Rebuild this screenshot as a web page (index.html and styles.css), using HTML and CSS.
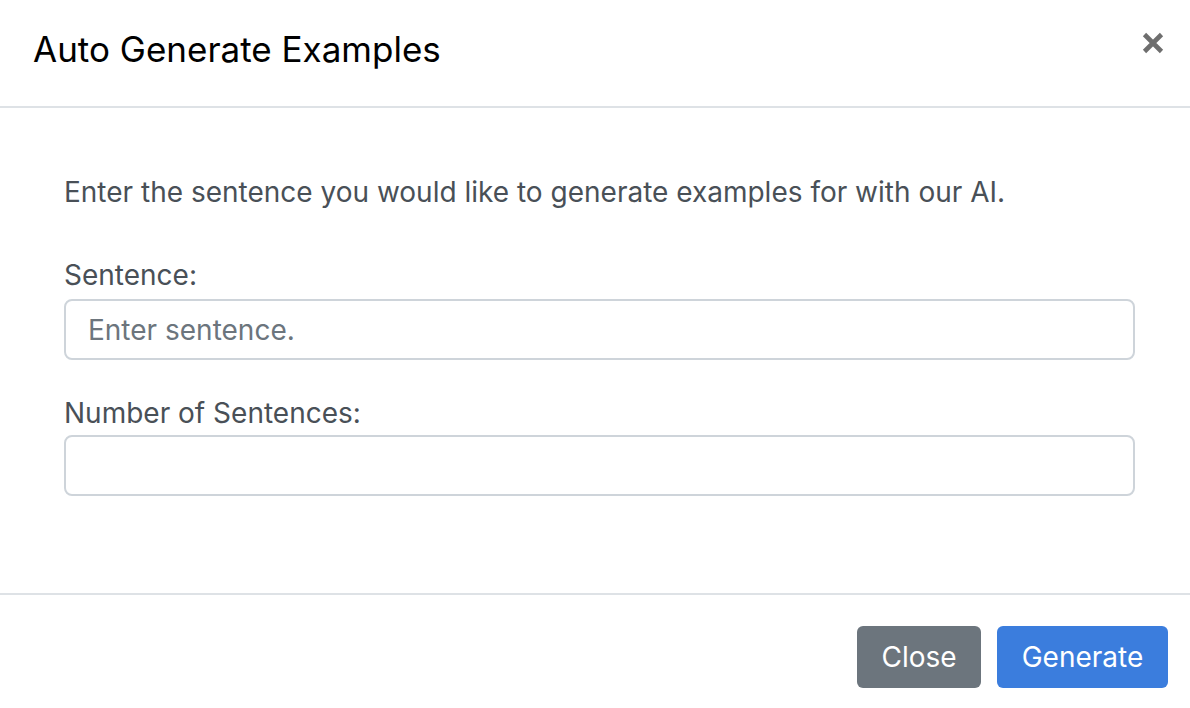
FILE: index.html
```html
<!DOCTYPE html>
<html>
<head>
<meta charset="utf-8">
<link rel="stylesheet" href="styles.css">
</head>
<body>
<div class="modal">
  <div class="modal-header">
    <h1 class="modal-title">Auto Generate Examples</h1>
    <button class="close-x" aria-label="Close">
      <svg width="22" height="22" viewBox="0 0 22 22"><path d="M2.5 2.5 L19.5 19.5 M19.5 2.5 L2.5 19.5" stroke="#6e6e6e" stroke-width="4.6" stroke-linecap="butt"/></svg>
    </button>
  </div>
  <div class="modal-body">
    <p class="intro">Enter the sentence you would like to generate examples for with our AI.</p>
    <label class="field-label">Sentence:</label>
    <input class="field-input" type="text" placeholder="Enter sentence.">
    <label class="field-label second">Number of Sentences:</label>
    <input class="field-input" type="text">
  </div>
  <div class="modal-footer">
    <button class="btn btn-secondary">Close</button>
    <button class="btn btn-primary">Generate</button>
  </div>
</div>
</body>
</html>
```

FILE: styles.css
```css
html, body {
  margin: 0;
  padding: 0;
  background: #fff;
}
body {
  font-family: Inter, "Liberation Sans", sans-serif;
  width: 1190px;
  height: 708px;
  overflow: hidden;
}
.modal {
  display: flex;
  flex-direction: column;
  height: 708px;
}
.modal-header {
  box-sizing: border-box;
  height: 108px;
  display: flex;
  align-items: flex-start;
  justify-content: space-between;
  padding: 28px 26px 0 33px;
  border-bottom: 2px solid #dee2e6;
}
.modal-title {
  margin: 0;
  font-size: 35px;
  font-weight: 400;
  color: #000;
  line-height: 42px;
}
.close-x {
  border: none;
  background: none;
  padding: 0;
  width: 22px;
  height: 22px;
  margin-top: 4px;
}
.close-x svg { display: block; }
.modal-body {
  padding: 63px 55px 0 64px;
  display: flex;
  flex-direction: column;
  height: 487px;
  box-sizing: border-box;
  border-bottom: 2px solid #dee2e6;
}
.intro {
  margin: 0 0 41px 0;
  font-size: 28px;
  line-height: 42px;
  color: #495057;
}
.field-label {
  font-size: 28px;
  line-height: 42px;
  color: #495057;
  margin-bottom: 3px;
}
.field-label.second {
  margin-top: 32px;
  margin-bottom: 1px;
}
.field-input {
  height: 61px;
  box-sizing: border-box;
  border: 2px solid #ced4da;
  border-radius: 8px;
  padding: 0 22px;
  font-family: Inter, "Liberation Sans", sans-serif;
  font-size: 28px;
  color: #495057;
  outline: none;
}
.field-input::placeholder {
  color: #6c757d;
}
.modal-footer {
  display: flex;
  justify-content: flex-end;
  gap: 16px;
  padding: 31px 22px 0 0;
}
.btn {
  height: 62px;
  border: none;
  border-radius: 6px;
  font-family: Inter, "Liberation Sans", sans-serif;
  font-size: 28px;
  color: #fff;
  padding: 0;
}
.btn-secondary {
  background: #6c757d;
  width: 124px;
}
.btn-primary {
  background: #3b7ddd;
  width: 171px;
}
```
